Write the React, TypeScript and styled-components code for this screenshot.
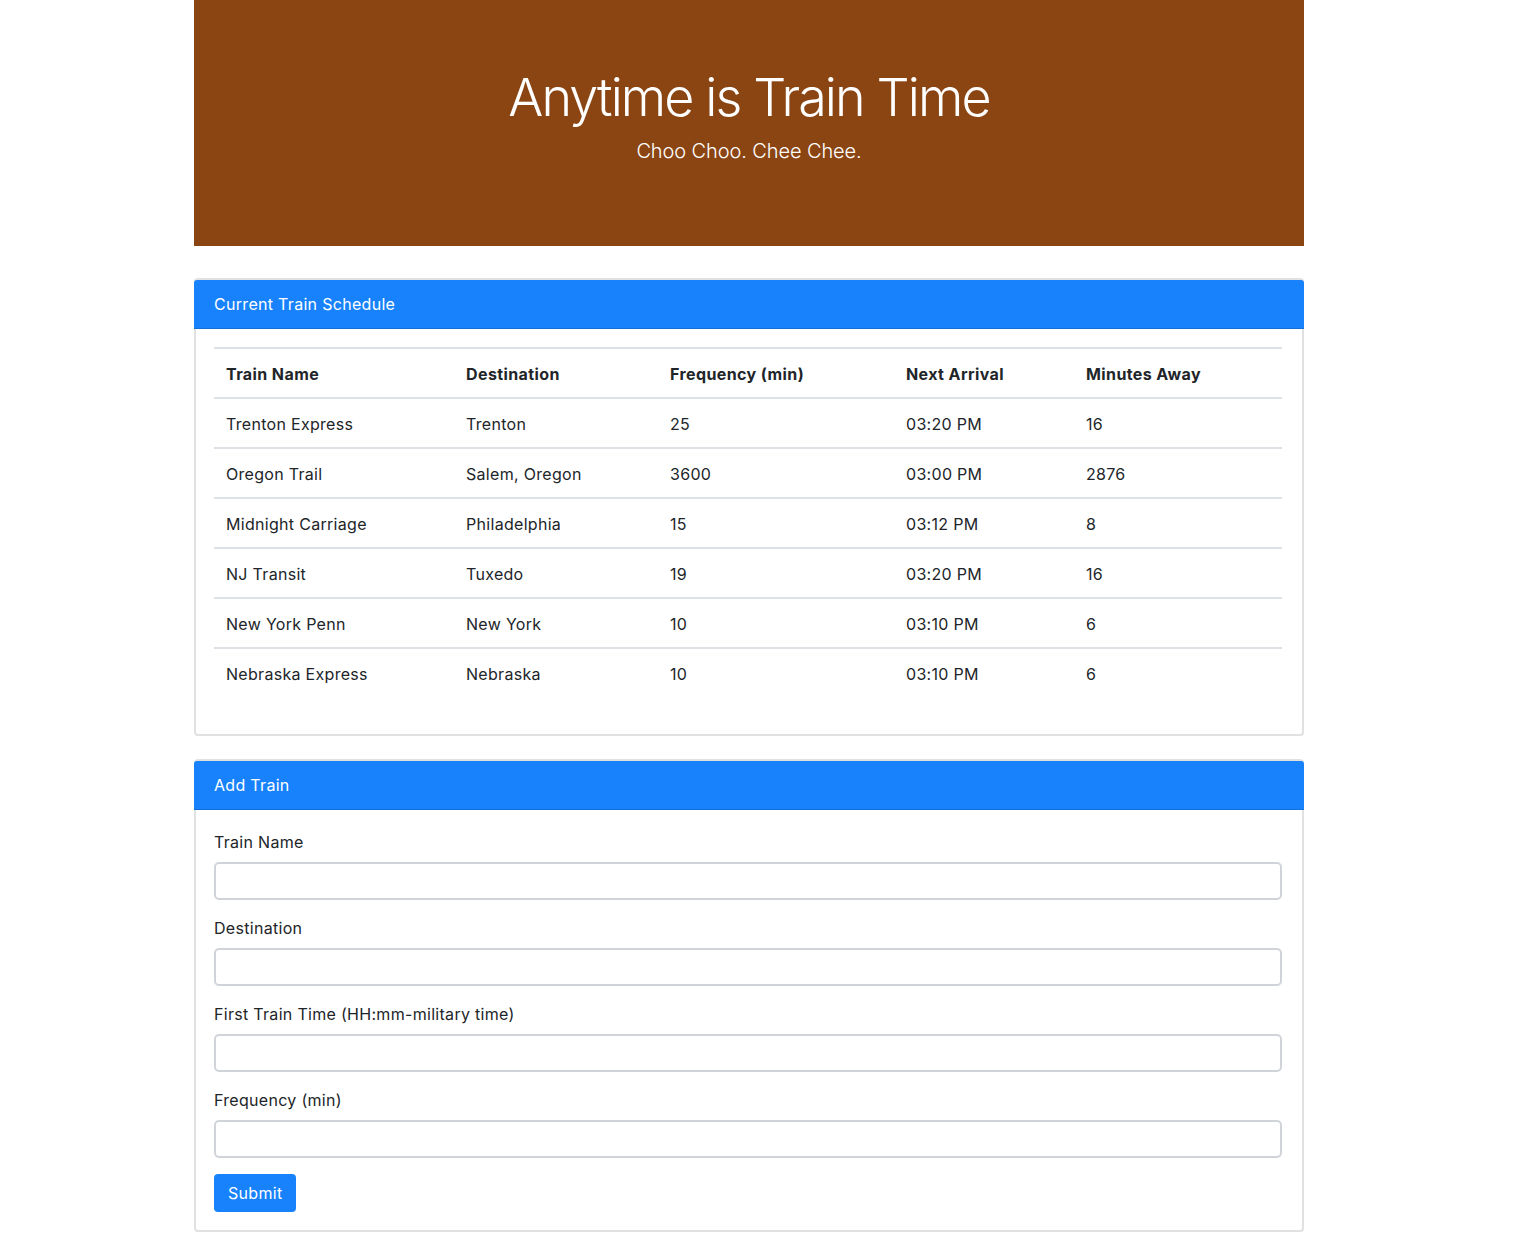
import React from "react";
import styled, { createGlobalStyle } from "styled-components";

const GlobalStyle = createGlobalStyle`
  html, body { margin: 0; padding: 0; background: #fff; }
  body {
    font-family: Inter, "Noto Sans", "Liberation Sans", sans-serif;
    color: #212529;
    font-size: 16px;
    line-height: 1.5;
  }
  * { box-sizing: border-box; }
`;

const Page = styled.div`
  width: 1498px;
`;

const Container = styled.div`
  width: 1110px;
  margin: 0 auto;
  padding-bottom: 14px;
`;

const Jumbotron = styled.header`
  background: #8b4513;
  color: #fff;
  text-align: center;
  padding: 64px 32px 66px;
  margin-bottom: 32px;
`;

const Title = styled.h1`
  margin: 0 0 8px;
  font-size: 52px;
  font-weight: 300;
  line-height: 65px;
  letter-spacing: -1.9px;
  padding-top: 1px;
`;

const Lead = styled.p`
  margin: 0 0 16px;
  font-size: 20px;
  font-weight: 300;
  line-height: 26px;
  letter-spacing: -0.1px;
`;

const Card = styled.section<{ $gap?: number }>`
  border: 2px solid #e1e1e1;
  border-radius: 4px;
  margin-bottom: ${(p) => p.$gap ?? 0}px;
`;

const CardHeader = styled.div`
  background: #1782fb;
  color: #fff;
  margin: 0 -2px;
  padding: 12px 20px;
  line-height: 24px;
  font-size: 16px;
  letter-spacing: 0.3px;
  border-bottom: 1px solid #1470d8;
  border-radius: 3px 3px 0 0;
`;

const CardBody = styled.div<{ $top: number; $bottom: number }>`
  padding: ${(p) => p.$top}px 20px ${(p) => p.$bottom}px 18px;
`;

const Table = styled.table`
  width: 100%;
  border-collapse: collapse;
  margin-bottom: 16px;
`;

const Th = styled.th<{ $w: number }>`
  width: ${(p) => p.$w}px;
  text-align: left;
  font-weight: 700;
  padding: 13px 12px 11px;
  line-height: 24px;
  border-top: 2px solid #dee2e6;
  letter-spacing: 0.4px;
`;

const Td = styled.td`
  padding: 13px 12px 11px;
  line-height: 24px;
  border-top: 2px solid #dee2e6;
  letter-spacing: 0.3px;
`;

const FormGroup = styled.div`
  margin-bottom: 16px;
`;

const Label = styled.label`
  display: block;
  margin-bottom: 8px;
  line-height: 24px;
  letter-spacing: 0.3px;
`;

const Input = styled.input`
  display: block;
  width: 100%;
  height: 38px;
  border: 2px solid #d0d4d9;
  border-radius: 5px;
  padding: 6px 12px;
  font: inherit;
  background: #fff;
  outline: none;
`;

const Button = styled.button`
  display: inline-block;
  background: #1782fb;
  color: #fff;
  border: none;
  border-radius: 4px;
  height: 38px;
  padding: 0 14px;
  font: inherit;
  letter-spacing: 0.3px;
  cursor: pointer;
`;

const columns = [
  { label: "Train Name", w: 240 },
  { label: "Destination", w: 204 },
  { label: "Frequency (min)", w: 236 },
  { label: "Next Arrival", w: 180 },
  { label: "Minutes Away", w: 208 },
];

const trains = [
  ["Trenton Express", "Trenton", "25", "03:20 PM", "16"],
  ["Oregon Trail", "Salem, Oregon", "3600", "03:00 PM", "2876"],
  ["Midnight Carriage", "Philadelphia", "15", "03:12 PM", "8"],
  ["NJ Transit", "Tuxedo", "19", "03:20 PM", "16"],
  ["New York Penn", "New York", "10", "03:10 PM", "6"],
  ["Nebraska Express", "Nebraska", "10", "03:10 PM", "6"],
];

const fields = [
  "Train Name",
  "Destination",
  "First Train Time (HH:mm-military time)",
  "Frequency (min)",
];

export default function App() {
  return (
    <Page>
      <GlobalStyle />
      <Container>
        <Jumbotron>
          <Title>Anytime is Train Time</Title>
          <Lead>Choo Choo. Chee Chee.</Lead>
        </Jumbotron>

        <Card $gap={23}>
          <CardHeader>Current Train Schedule</CardHeader>
          <CardBody $top={18} $bottom={21}>
            <Table>
              <thead>
                <tr>
                  {columns.map((c) => (
                    <Th key={c.label} $w={c.w}>
                      {c.label}
                    </Th>
                  ))}
                </tr>
              </thead>
              <tbody>
                {trains.map((row) => (
                  <tr key={row[0]}>
                    {row.map((cell, i) => (
                      <Td key={i}>{cell}</Td>
                    ))}
                  </tr>
                ))}
              </tbody>
            </Table>
          </CardBody>
        </Card>

        <Card>
          <CardHeader>Add Train</CardHeader>
          <CardBody $top={20} $bottom={18}>
            <form onSubmit={(e) => e.preventDefault()}>
              {fields.map((f) => (
                <FormGroup key={f}>
                  <Label>{f}</Label>
                  <Input type="text" />
                </FormGroup>
              ))}
              <Button type="submit">Submit</Button>
            </form>
          </CardBody>
        </Card>
      </Container>
    </Page>
  );
}
